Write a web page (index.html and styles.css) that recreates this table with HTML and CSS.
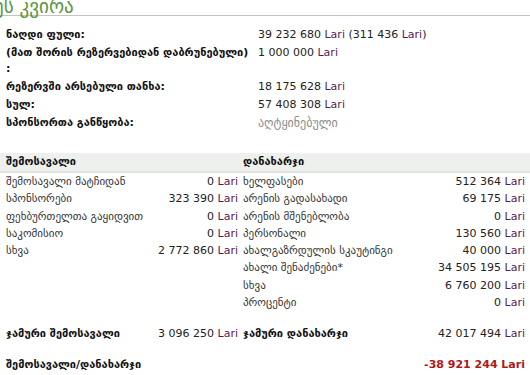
FILE: index.html
```html
<!DOCTYPE html>
<html lang="ka">
<head>
<meta charset="utf-8">
<title>ეს კვირა</title>
<link rel="stylesheet" href="styles.css">
</head>
<body>
<div class="page">
  <h2 class="title">ეს კვირა</h2>

  <div class="summary">
    <div class="lbl">ნაღდი ფული:</div>
    <div class="val">39 232 680 <span class="cur">Lari</span> (311 436 <span class="cur">Lari</span>)</div>
    <div class="lbl">(მათ შორის რეზერვებიდან დაბრუნებული) :</div>
    <div class="val">1 000 000 <span class="cur">Lari</span></div>
    <div class="lbl">რეზერვში არსებული თანხა:</div>
    <div class="val">18 175 628 <span class="cur">Lari</span></div>
    <div class="lbl">სულ:</div>
    <div class="val">57 408 308 <span class="cur">Lari</span></div>
    <div class="lbl">სპონსორთა განწყობა:</div>
    <div class="val"><span class="mood">აღტყინებული</span></div>
  </div>

  <div class="fin">
    <div class="fin-head">
      <div class="hcell">შემოსავალი</div>
      <div class="hcell">დანახარჯი</div>
    </div>
    <div class="fin-body">
      <div class="col">
        <div class="row"><span class="name">შემოსავალი მატჩიდან</span><span class="amt">0 <span class="cur">Lari</span></span></div>
        <div class="row"><span class="name">სპონსორები</span><span class="amt">323 390 <span class="cur">Lari</span></span></div>
        <div class="row"><span class="name">ფეხბურთელთა გაყიდვით</span><span class="amt">0 <span class="cur">Lari</span></span></div>
        <div class="row"><span class="name">საკომისიო</span><span class="amt">0 <span class="cur">Lari</span></span></div>
        <div class="row"><span class="name">სხვა</span><span class="amt">2 772 860 <span class="cur">Lari</span></span></div>
      </div>
      <div class="col">
        <div class="row"><span class="name">ხელფასები</span><span class="amt">512 364 <span class="cur">Lari</span></span></div>
        <div class="row"><span class="name">არენის გადასახადი</span><span class="amt">69 175 <span class="cur">Lari</span></span></div>
        <div class="row"><span class="name">არენის მშენებლობა</span><span class="amt">0 <span class="cur">Lari</span></span></div>
        <div class="row"><span class="name">პერსონალი</span><span class="amt">130 560 <span class="cur">Lari</span></span></div>
        <div class="row"><span class="name">ახალგაზრდულის სკაუტინგი</span><span class="amt">40 000 <span class="cur">Lari</span></span></div>
        <div class="row"><span class="name">ახალი შენაძენები*</span><span class="amt">34 505 195 <span class="cur">Lari</span></span></div>
        <div class="row"><span class="name">სხვა</span><span class="amt">6 760 200 <span class="cur">Lari</span></span></div>
        <div class="row"><span class="name">პროცენტი</span><span class="amt">0 <span class="cur">Lari</span></span></div>
      </div>
    </div>
    <div class="fin-total">
      <div class="row"><span class="name strong">ჯამური შემოსავალი</span><span class="amt">3 096 250 <span class="cur">Lari</span></span></div>
      <div class="row"><span class="name strong">ჯამური დანახარჯი</span><span class="amt">42 017 494 <span class="cur">Lari</span></span></div>
    </div>
    <div class="fin-balance">
      <span class="name strong">შემოსავალი/დანახარჯი</span>
      <span class="neg">-38 921 244 Lari</span>
    </div>
  </div>
</div>
</body>
</html>
```

FILE: styles.css
```css
html, body {
  margin: 0;
  padding: 0;
  background: #ffffff;
}

body {
  font-family: "DejaVu Sans", Verdana, sans-serif;
  font-size: 11px;
  color: #222222;
}

.page {
  width: 530px;
  overflow: hidden;
}

.title {
  margin: -3px 0 0 -6px;
  padding: 0;
  font-size: 19px;
  line-height: 18px;
  font-weight: normal;
  color: #5c9640;
  border-bottom: 1px solid #c4c4c4;
}

.summary {
  margin-top: 10px;
  display: grid;
  grid-template-columns: 252px 1fr;
  padding-left: 6px;
}

.summary .lbl,
.summary .val {
  padding: 1px 0;
  line-height: 16px;
}

.summary .lbl {
  font-weight: bold;
  color: #111111;
  padding-right: 4px;
}

.cur {
  color: #5a1a5a;
}

.mood {
  font-size: 12px;
  color: #8c8c8c;
}

.fin {
  margin-top: 20px;
}

.fin-head,
.fin-body,
.fin-total {
  display: grid;
  grid-template-columns: 232px 282px;
  column-gap: 5px;
  padding-left: 6px;
}

.fin-head {
  background: #eef0ee;
  border-bottom: 2px solid #dfe2df;
  line-height: 18px;
  font-weight: bold;
  color: #111111;
}

.fin-body {
  align-items: start;
}

.row {
  display: flex;
  justify-content: space-between;
  line-height: 17.3px;
}

.name {
  color: #333333;
}

.name.strong {
  font-weight: bold;
  color: #111111;
}

.amt {
  white-space: nowrap;
}

.fin-total {
  margin-top: 14px;
}

.fin-balance {
  margin-top: 13px;
  display: flex;
  justify-content: space-between;
  padding: 0 5px 0 6px;
  line-height: 17.3px;
}

.neg {
  font-weight: bold;
  color: #b01818;
}
```
